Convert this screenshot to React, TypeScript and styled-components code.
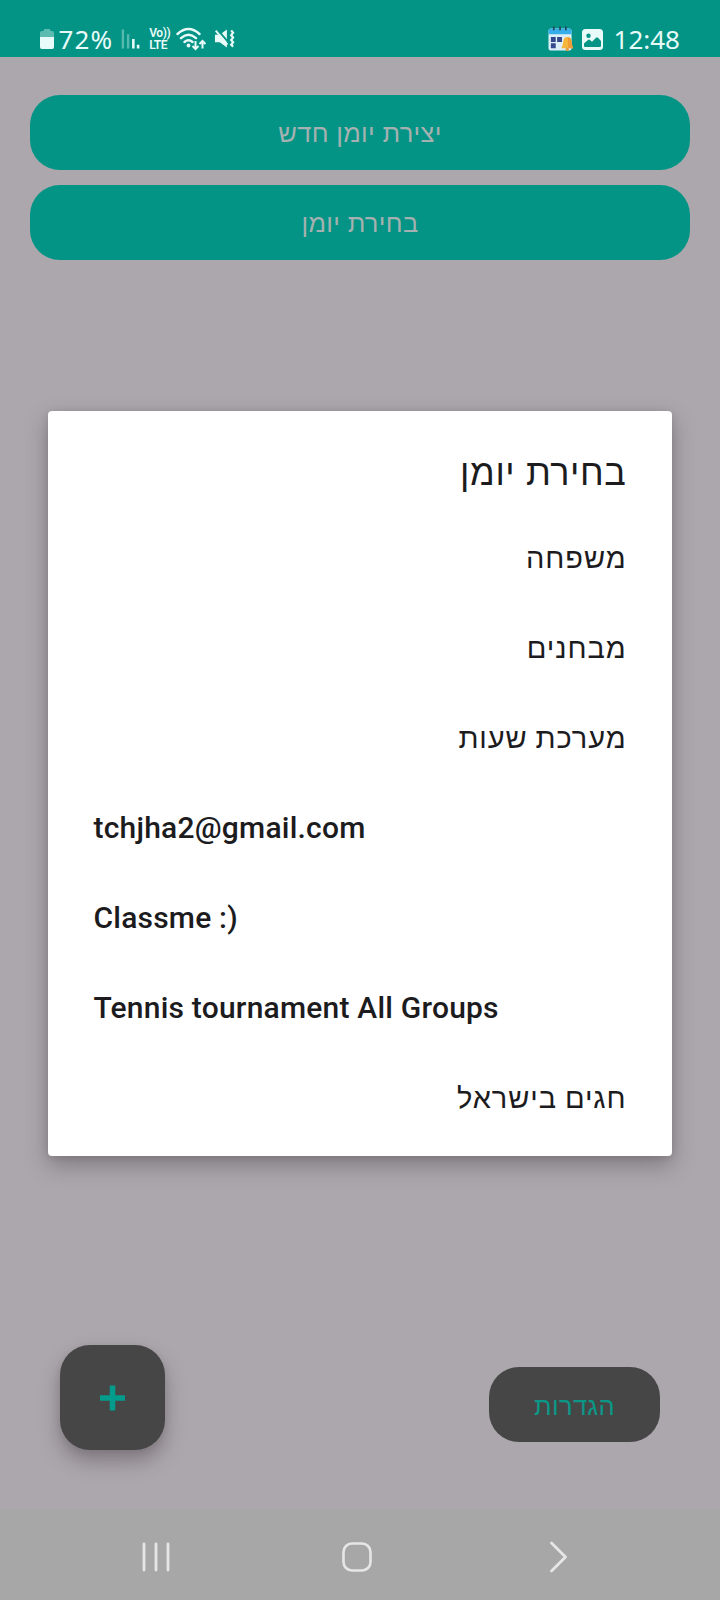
import React from "react";
import styled, { createGlobalStyle } from "styled-components";

const GlobalStyle = createGlobalStyle`
  *, *::before, *::after { box-sizing: border-box; }
  body { margin: 0; background: #aca7ac; }
  button { border: 0; padding: 0; margin: 0; cursor: pointer; }
`;

const hebrew = `"Liberation Sans", sans-serif`;

const Screen = styled.div`
  position: relative;
  display: flex;
  flex-direction: column;
  width: 720px;
  height: 1600px;
  overflow: hidden;
  background: #aca7ac;
  font-family: ${hebrew};
`;

const StatusBar = styled.header`
  display: flex;
  justify-content: space-between;
  height: 57px;
  padding: 22px 40px 0 40px;
  background: #039486;
  color: #e9fbf8;
`;

const StatusGroup = styled.div`
  display: flex;
  align-items: center;
  height: 34px;
`;

const StatusText = styled.span<{ $start?: number; $spacing?: number }>`
  margin-left: ${(p) => p.$start ?? 0}px;
  font: 400 26px/34px "Noto Sans", sans-serif;
  letter-spacing: ${(p) => p.$spacing ?? 0}px;
`;

const Lte = styled.div`
  display: flex;
  flex-direction: column;
  width: 21px;
  margin-left: 9px;
  font: 600 12px/12px Roboto, sans-serif;
  letter-spacing: -0.4px;
  white-space: nowrap;
`;

const StatusIcon = styled.svg<{ $start?: number }>`
  display: block;
  flex: none;
  margin-left: ${(p) => p.$start ?? 0}px;
`;

const Page = styled.main`
  display: flex;
  flex: 1;
  flex-direction: column;
  justify-content: space-between;
  padding: 38px 30px 60px;
`;

const ActionList = styled.div`
  display: flex;
  flex-direction: column;
  gap: 15px;
`;

const PillButton = styled.button`
  height: 75px;
  padding-top: 1px;
  border-radius: 30px;
  background: #039486;
  color: #a5b1b0;
  font: 400 25.5px/36px ${hebrew};
  letter-spacing: 0.35px;
`;

const BottomActions = styled.div`
  display: flex;
  align-items: flex-end;
  justify-content: space-between;
  padding: 0 30px;
`;

const AddButton = styled.button`
  display: flex;
  align-items: center;
  justify-content: center;
  width: 105px;
  height: 105px;
  border-radius: 30px;
  background: #464646;
  box-shadow: 0 11px 20px rgba(60, 50, 60, 0.38), 0 2px 6px rgba(60, 50, 60, 0.1);
`;

const SettingsButton = styled(PillButton)`
  width: 171px;
  margin-bottom: 8px;
  padding-top: 2px;
  background: #464646;
  color: #0b9787;
`;

const Dialog = styled.section`
  position: absolute;
  top: 411px;
  left: 48px;
  width: 624px;
  height: 745px;
  padding: 33px 45.5px 0;
  border-radius: 4px;
  background: #fff;
  color: #1c1b1e;
  box-shadow: 0 9px 22px rgba(40, 35, 40, 0.34), 0 1px 6px rgba(40, 35, 40, 0.12);
`;

const DialogTitle = styled.h1`
  margin: 0;
  height: 69px;
  direction: rtl;
  font: 400 36px/58px ${hebrew};
  letter-spacing: 0.6px;
`;

const CalendarList = styled.ul`
  display: flex;
  flex-direction: column;
  margin: 0;
  padding: 0;
  list-style: none;
`;

const CalendarItem = styled.li<{ $latin?: boolean }>`
  display: flex;
  align-items: center;
  height: 90px;
  direction: ${(p) => (p.$latin ? "ltr" : "rtl")};
  font-family: ${(p) => (p.$latin ? "Roboto, sans-serif" : hebrew)};
  font-size: ${(p) => (p.$latin ? 30 : 29)}px;
  font-weight: ${(p) => (p.$latin ? 500 : 400)};
  line-height: 40px;
  letter-spacing: ${(p) => (p.$latin ? 0.21 : 0.9)}px;
  word-spacing: ${(p) => (p.$latin ? 0 : -1)}px;
`;

const NavBar = styled.nav`
  display: flex;
  align-items: center;
  height: 90px;
  padding: 4px 0 0 140px;
  background: #a7a7a7;
`;

const NavIcon = styled.svg<{ $start?: number }>`
  flex: none;
  margin-left: ${(p) => p.$start ?? 0}px;
`;

const calendars = [
  { name: "משפחה" },
  { name: "מבחנים" },
  { name: "מערכת שעות" },
  { name: "tchjha2@gmail.com", latin: true },
  { name: "Classme :)", latin: true },
  { name: "Tennis tournament All Groups", latin: true },
  { name: "חגים בישראל" },
];

const Battery = () => (
  <StatusIcon width="14" height="22" viewBox="0 0 15 22" preserveAspectRatio="none">
    <path d="M4 2q0-1 1-1h5q1 0 1 1v1h2q2 0 2 2v4H0V5q0-2 2-2h2z" fill="#5dbcb2" />
    <path d="M0 9h15v10q0 2-2 2H2q-2 0-2-2z" fill="#e9fbf8" />
  </StatusIcon>
);

const Signal = () => (
  <StatusIcon $start={8} width="19" height="22" viewBox="0 0 20 22">
    <path d="M2 1v20M7.5 6v15" stroke="#56b9ae" strokeWidth="2.5" />
    <path d="M13 11v10M18 17v4" stroke="#e9fbf8" strokeWidth="2.7" />
  </StatusIcon>
);

const Wifi = () => (
  <StatusIcon $start={6} width="30" height="24" viewBox="0 0 30 24" fill="none" stroke="#e9fbf8">
    <path d="M1.500 7Q12.500 -3 23.500 7M5 11.200Q12.500 4.500 20 11.200M8.500 15Q12.500 11.500 16.500 15" strokeWidth="2.400" strokeLinecap="round" />
    <circle cx="12.500" cy="18.500" r="1.900" fill="#e9fbf8" stroke="none" />
    <path d="M19.500 14v8M16.500 19l3 3 3-3M26.500 21.500V14M23.500 17l3-3 3 3" strokeWidth="2" />
  </StatusIcon>
);

const Muted = () => (
  <StatusIcon $start={8} width="21" height="22" viewBox="0 0 22 22">
    <path d="M1 6.500h5l7.500-5.500v19L6 14.500H1z" fill="#e9fbf8" />
    <path d="M3.500 1L15.500 15" stroke="#039486" strokeWidth="2" />
    <path d="M1.800 2.200L14 17" stroke="#e9fbf8" strokeWidth="2" />
    <path d="M18 2l2 2.500-2 2.500 2 2.500-2 2.500 2 2.500-2 2.500 2 2" fill="none" stroke="#e9fbf8" strokeWidth="2.300" />
  </StatusIcon>
);

const CalendarIcon = () => (
  <StatusIcon width="26" height="28" viewBox="0 0 27 28">
    <rect x="0.500" y="3" width="24" height="23" rx="3" fill="#dceff8" />
    <path d="M.5 9V6q0-3 3-3h18q3 0 3 3v3z" fill="#35aeea" />
    <path d="M6 1v4M12.500 1v4M18.500 1v4" stroke="#20434f" strokeWidth="1.700" />
    <path d="M3 12h5v5H3zM9.500 12h5v5h-5zM3 18.500h5v5H3z" fill="#34488f" />
    <path d="M20 12q4 0 4.500 5 .3 4 1.700 6.500H14q1.500-2.500 1.700-6.500 .5-5 4.300-5z" fill="#f6b63e" />
    <path d="M20.500 12q3.500.3 4 5 .3 4 1.700 6.500H21z" fill="#ed9d38" />
    <circle cx="20" cy="24.800" r="1.700" fill="#e79a3a" />
  </StatusIcon>
);

const PictureIcon = () => (
  <StatusIcon $start={7.5} width="21" height="21" viewBox="0 0 21 21">
    <rect width="21" height="21" rx="3.500" fill="#e9fbf8" />
    <circle cx="6.500" cy="6.800" r="2.200" fill="#039486" />
    <path d="M2 17v-2.500l4-3.500q1-.8 2 0l2 1.800 4-4q1-1 2 0l3 3.200v5q0 1-1 1H3q-1 0-1-1z" fill="#039486" />
  </StatusIcon>
);

export default function App() {
  return (
    <Screen>
      <GlobalStyle />
      <StatusBar>
        <StatusGroup>
          <Battery />
          <StatusText $start={4.5} $spacing={1.1}>72%</StatusText>
          <Signal />
          <Lte>
            <span>Vo))</span>
            <span>LTE</span>
          </Lte>
          <Wifi />
          <Muted />
        </StatusGroup>
        <StatusGroup>
          <CalendarIcon />
          <PictureIcon />
          <StatusText $start={11}>12:48</StatusText>
        </StatusGroup>
      </StatusBar>
      <Page>
        <ActionList>
          <PillButton>יצירת יומן חדש</PillButton>
          <PillButton>בחירת יומן</PillButton>
        </ActionList>
        <BottomActions>
          <AddButton aria-label="הוספה">
            <svg width="26" height="26" viewBox="0 0 26 26">
              <path d="M12.500 0.500v25M0 13h25" stroke="#039b8b" strokeWidth="5.600" />
            </svg>
          </AddButton>
          <SettingsButton>הגדרות</SettingsButton>
        </BottomActions>
      </Page>
      <NavBar>
        <NavIcon width="32" height="32" viewBox="0 0 32 32" stroke="#e6e6e6" strokeWidth="2.800" strokeLinecap="round">
          <path d="M4 3v26M16 3v26M28 3v26" />
        </NavIcon>
        <NavIcon $start={169} width="32" height="32" viewBox="0 0 32 32" fill="none" stroke="#e6e6e6" strokeWidth="2.600">
          <rect x="2.500" y="2.500" width="27" height="27" rx="8.500" />
        </NavIcon>
        <NavIcon $start={172} width="24" height="32" viewBox="0 0 24 32" fill="none" stroke="#e6e6e6" strokeWidth="2.800" strokeLinecap="round" strokeLinejoin="round">
          <path d="M6.500 2l14 14-14 14" />
        </NavIcon>
      </NavBar>
      <Dialog role="dialog">
        <DialogTitle>בחירת יומן</DialogTitle>
        <CalendarList>
          {calendars.map((c) => (
            <CalendarItem key={c.name} $latin={c.latin}>
              {c.name}
            </CalendarItem>
          ))}
        </CalendarList>
      </Dialog>
    </Screen>
  );
}
